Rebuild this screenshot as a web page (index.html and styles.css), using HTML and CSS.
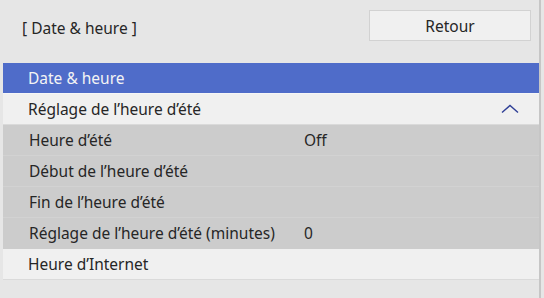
FILE: index.html
```html
<!DOCTYPE html>
<html lang="fr">
<head>
    <meta charset="UTF-8">
    <title>Date &amp; heure</title>
    <link rel="stylesheet" href="styles.css">
</head>
<body>
    <div class="panel">
        <header class="panel-header">
            <span class="panel-title">[ Date &amp; heure ]</span>
            <button class="back-btn">Retour</button>
        </header>

        <ul class="menu">
            <li class="row selected"><span class="label">Date &amp; heure</span></li>
            <li class="row group">
                <span class="label">Réglage de l’heure d’été</span>
                <svg class="chevron" width="18" height="10" viewBox="0 0 18 10">
                    <path d="M1 8.5 L9 1.5 L17 8.5" fill="none" stroke="#2f3f96" stroke-width="1.4"/>
                </svg>
            </li>
            <li class="row sub"><span class="label">Heure d’été</span><span class="value">Off</span></li>
            <li class="row sub"><span class="label">Début de l’heure d’été</span></li>
            <li class="row sub"><span class="label">Fin de l’heure d’été</span></li>
            <li class="row sub"><span class="label">Réglage de l’heure d’été (minutes)</span><span class="value">0</span></li>
            <li class="row group"><span class="label">Heure d’Internet</span></li>
            <li class="row empty"></li>
        </ul>
    </div>
</body>
</html>
```

FILE: styles.css
```css
/* Écran de réglage - menu projecteur */
:root {
    --bg: #e6e6e6;
    --row-light: #f0f0f0;
    --row-sub: #cccccc;
    --select: #4f6cc9;
    --text: #262626;
}

* { margin: 0; padding: 0; box-sizing: border-box; }

body {
    background: var(--bg);
    font-family: "Noto Sans", "Open Sans", sans-serif;
    font-size: 15.5px;
    color: var(--text);
    overflow: hidden;
}

.panel {
    width: 541px;
    height: 298px;
    padding-left: 3px;
    border-right: 2px solid #c6c6c6;
}

/* En-tête */
.panel-header {
    height: 63px;
    display: flex;
    align-items: flex-start;
    justify-content: space-between;
    padding: 10px 8px 0 19px;
}
.panel-title {
    margin-top: 7px;
    line-height: 22px;
}
.back-btn {
    width: 162px;
    height: 31px;
    background: #f0f0f0;
    border: 1px solid #d2d2d2;
    font: inherit;
    color: var(--text);
}

/* Liste */
.menu { list-style: none; }

.row {
    height: 31px;
    display: flex;
    align-items: center;
    padding: 0 20px 0 25px;
    border-bottom: 1px solid #f6f6f6;
}
.row .label { width: 275px; }

.selected {
    background: var(--select);
    color: #f4f4f4;
}
.group { background: var(--row-light); border-bottom-color: #dadada; }
.sub {
    background: var(--row-sub);
    border-bottom-color: #d2d2d2;
    padding-left: 26px;
}
.sub:nth-child(6) { border-bottom-color: #cccccc; }
.empty { background: var(--bg); border: none; }

.chevron { margin-left: auto; }
```
